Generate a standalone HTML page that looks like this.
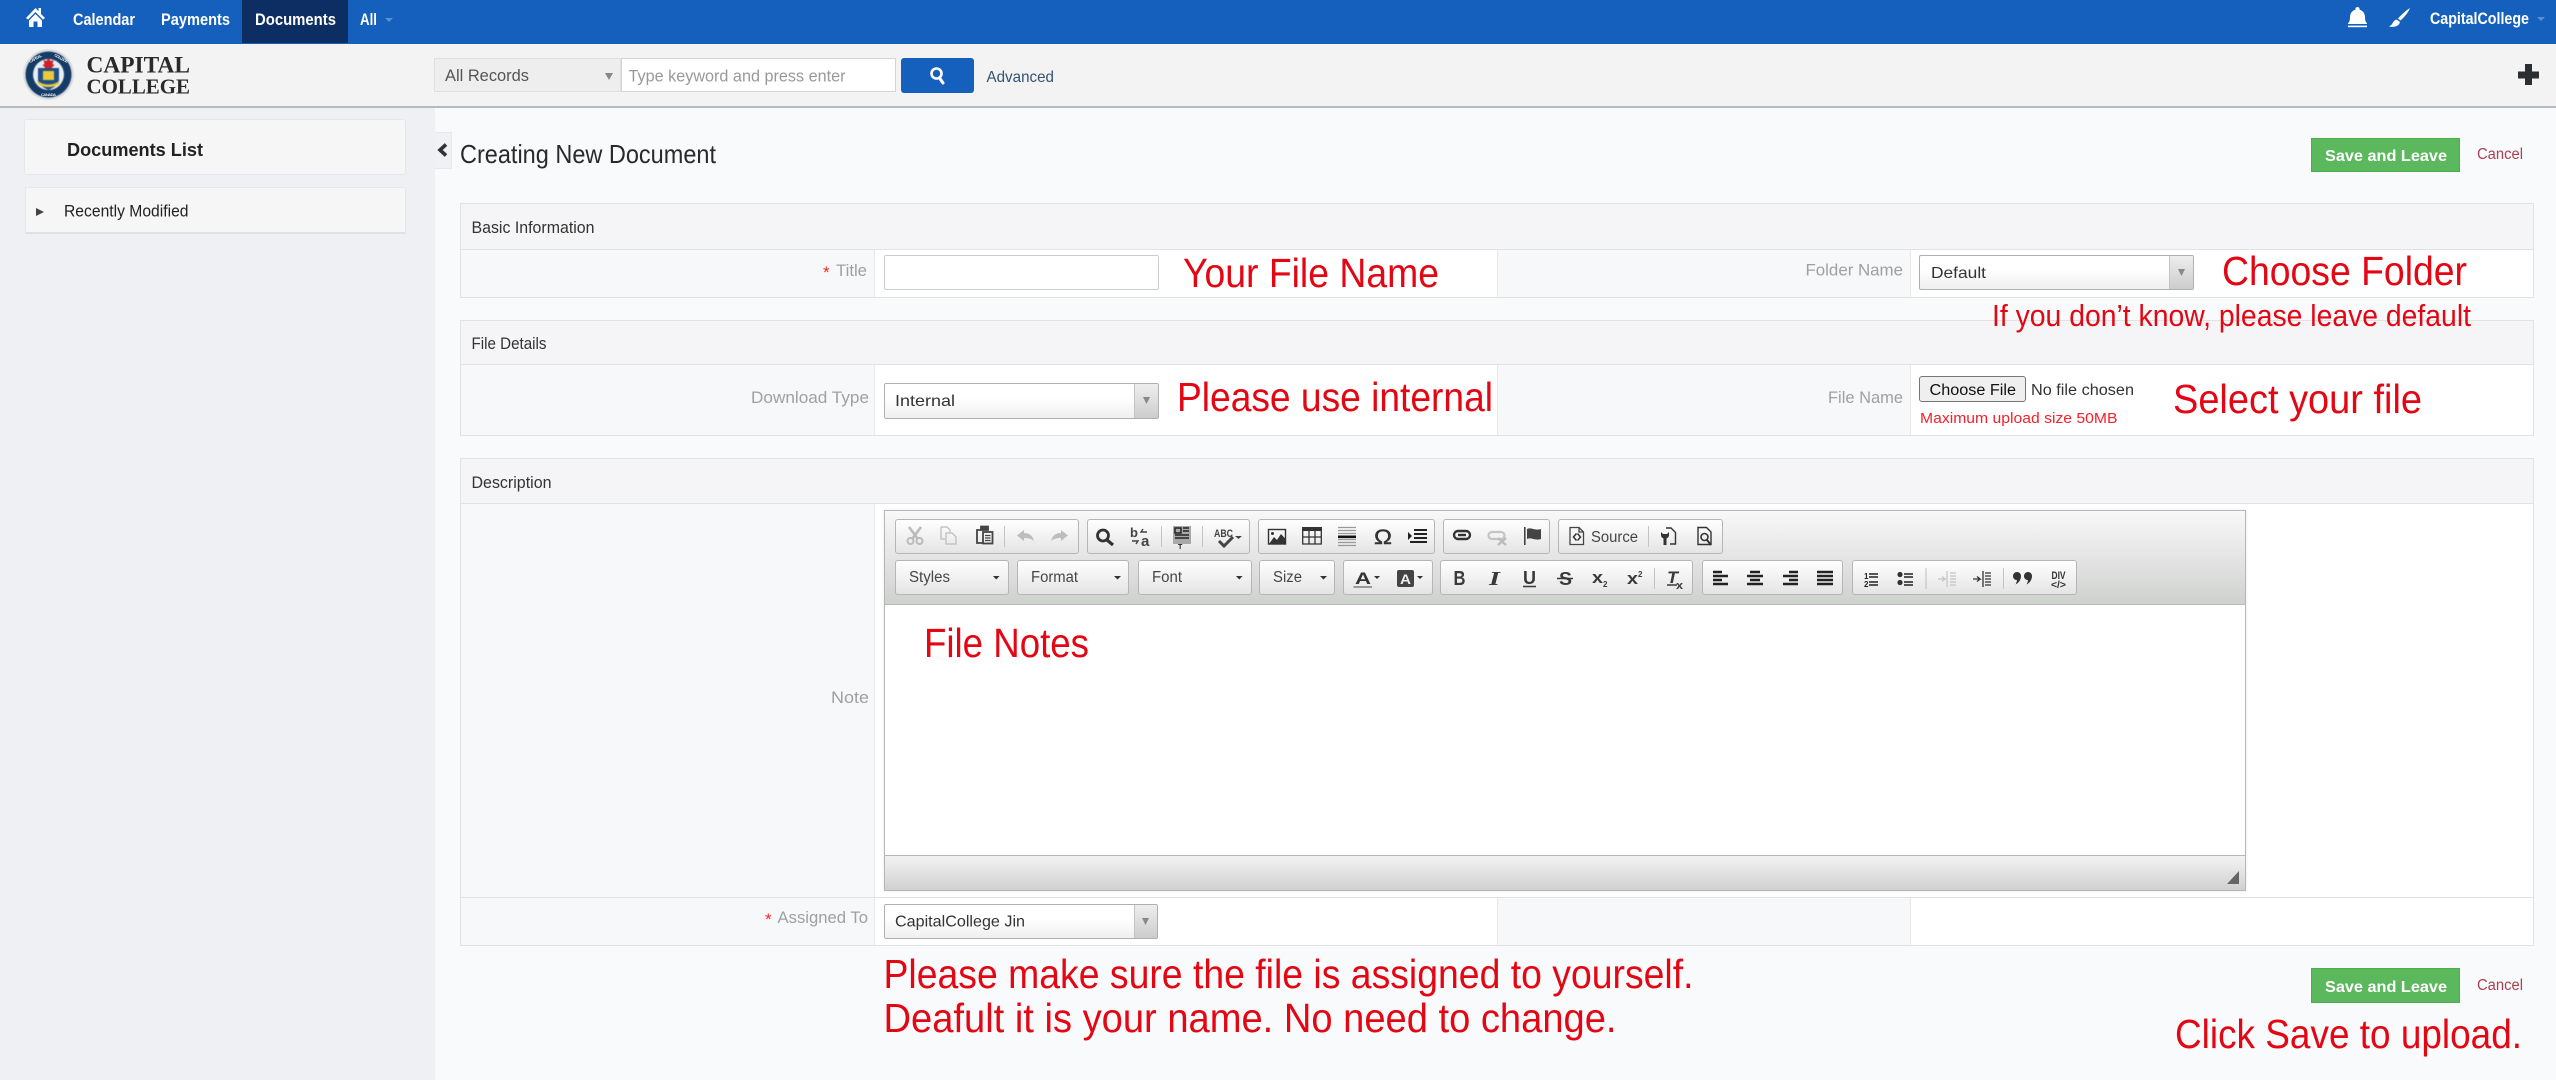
<!DOCTYPE html>
<html lang="en">
<head>
<meta charset="utf-8">
<title>Creating New Document</title>
<style>
html,body{margin:0;padding:0;width:2556px;height:1080px;overflow:hidden;background:#f9fafc;font-family:"Liberation Sans",sans-serif}
.b{position:absolute;box-sizing:border-box}
svg.o{position:absolute;left:0;top:0}
text{font-family:"Liberation Sans",sans-serif}
.an{fill:#e30613;font-size:41px}
.lb{fill:#a0a0a0;font-size:17px}
.hd{fill:#333;font-size:16.500px}
.tg{background:linear-gradient(#fff,#e4e4e4);border:1px solid #b6b6b6;border-radius:3px}
.sel{background:linear-gradient(#fff 40%,#efefef);border:1px solid #b0b0b0;border-radius:2px}
.ar{background:linear-gradient(#eee,#cdcdcd);border-left:1px solid #c4c4c4}
.sec{background:#f5f5f7;border:1px solid #e2e2e2}
.row{background:#fff;border:1px solid #e2e2e2;border-top:0}
.lc{background:#f7f8fa;border-right:1px solid #e8e8e8;border-left:1px solid #e8e8e8}
.btn{background:#5cb85c;border:1px solid #4cae4c}
</style>
</head>
<body>
<!-- top nav -->
<div class="b" style="left:0;top:0;width:2556px;height:44px;background:#1560bd"></div>
<div class="b" style="left:242px;top:0;width:106px;height:43px;background:#0c2e63"></div>
<!-- header bar -->
<div class="b" style="left:0;top:44px;width:2556px;height:64px;background:#f3f3f3;border-bottom:2px solid #b9b9b9;z-index:3"></div>
<!-- sidebar -->
<div class="b" style="left:0;top:108px;width:435px;height:972px;background:#eef0f4"></div>
<div class="b" style="left:24px;top:119px;width:382px;height:56px;background:#f6f6f6;border:1px solid #e6e7ea;border-radius:3px"></div>
<div class="b" style="left:25px;top:187px;width:381px;height:47px;background:#f6f6f6;border:1px solid #e6e7ea;border-bottom:2px solid #e0e1e4"></div>
<div class="b" style="left:435px;top:132px;width:17px;height:37px;background:#f0f1f4;border:1px solid #e6e7ea;border-left:0"></div>
<!-- search -->
<div class="b" style="left:434px;top:58px;width:187px;height:34px;background:#eee;border:1px solid #e0e0e0;z-index:4"></div>
<div class="b" style="left:621px;top:58px;width:275px;height:34px;background:#fff;border:1px solid #d4d4d4;z-index:4"></div>
<div class="b" style="left:901px;top:58px;width:73px;height:35px;background:#1560bd;border-radius:3px;z-index:4"></div>

<!-- section 1 -->
<div class="b sec" style="left:460px;top:203px;width:2074px;height:47px"></div>
<div class="b row" style="left:460px;top:249px;width:2074px;height:49px;border-top:1px solid #e2e2e2"></div>
<div class="b lc" style="left:461px;top:250px;width:414px;height:47px;border-left:0"></div>
<div class="b lc" style="left:1497px;top:250px;width:414px;height:47px"></div>
<div class="b" style="left:884px;top:255px;width:275px;height:35px;background:#fff;border:1px solid #ccc;border-radius:2px"></div>
<div class="b sel" style="left:1919px;top:255px;width:275px;height:35px"></div>
<div class="b ar" style="left:2169px;top:256px;width:24px;height:33px"></div>

<!-- section 2 -->
<div class="b sec" style="left:460px;top:320px;width:2074px;height:45px"></div>
<div class="b row" style="left:460px;top:364px;width:2074px;height:72px;border-top:1px solid #e2e2e2"></div>
<div class="b lc" style="left:461px;top:365px;width:414px;height:70px;border-left:0"></div>
<div class="b lc" style="left:1497px;top:365px;width:414px;height:70px"></div>
<div class="b sel" style="left:884px;top:383px;width:275px;height:36px"></div>
<div class="b ar" style="left:1134px;top:384px;width:24px;height:34px"></div>
<div class="b" style="left:1919px;top:376px;width:107px;height:26px;background:#efefef;border:1px solid #767676;border-radius:3px"></div>

<!-- section 3 -->
<div class="b sec" style="left:460px;top:458px;width:2074px;height:46px"></div>
<div class="b row" style="left:460px;top:503px;width:2074px;height:395px;border-top:1px solid #e2e2e2"></div>
<div class="b lc" style="left:461px;top:504px;width:414px;height:393px;border-left:0"></div>
<div class="b row" style="left:460px;top:897px;width:2074px;height:49px;border-top:1px solid #e2e2e2"></div>
<div class="b lc" style="left:461px;top:898px;width:414px;height:47px;border-left:0"></div>
<div class="b lc" style="left:1497px;top:898px;width:414px;height:47px"></div>
<div class="b sel" style="left:884px;top:904px;width:274px;height:35px"></div>
<div class="b ar" style="left:1134px;top:905px;width:23px;height:33px"></div>

<!-- editor -->
<div class="b" style="left:884px;top:510px;width:1362px;height:381px;background:#fff;border:1px solid #b6b6b6;box-shadow:0 0 3px rgba(0,0,0,.1)"></div>
<div class="b" style="left:885px;top:511px;width:1360px;height:94px;background:linear-gradient(#f8f8f8,#cfd1cf);border-bottom:1px solid #bcbcbc"></div>
<div class="b" style="left:885px;top:855px;width:1360px;height:35px;background:linear-gradient(#f2f2f2,#cfd1cf);border-top:1px solid #b6b6b6"></div>
<!-- toolbar groups -->
<div class="b tg" style="left:895px;top:519px;width:184px;height:35px"></div>
<div class="b tg" style="left:1087px;top:519px;width:163px;height:35px"></div>
<div class="b tg" style="left:1258px;top:519px;width:177px;height:35px"></div>
<div class="b tg" style="left:1443px;top:519px;width:107px;height:35px"></div>
<div class="b tg" style="left:1558px;top:519px;width:165px;height:35px"></div>
<div class="b tg" style="left:895px;top:560px;width:114px;height:35px"></div>
<div class="b tg" style="left:1017px;top:560px;width:112px;height:35px"></div>
<div class="b tg" style="left:1138px;top:560px;width:114px;height:35px"></div>
<div class="b tg" style="left:1259px;top:560px;width:76px;height:35px"></div>
<div class="b tg" style="left:1343px;top:560px;width:90px;height:35px"></div>
<div class="b tg" style="left:1440px;top:560px;width:253px;height:35px"></div>
<div class="b tg" style="left:1702px;top:560px;width:141px;height:35px"></div>
<div class="b tg" style="left:1852px;top:560px;width:225px;height:35px"></div>
<!-- buttons -->
<div class="b btn" style="left:2311px;top:138px;width:149px;height:34px"></div>
<div class="b btn" style="left:2311px;top:968px;width:149px;height:35px"></div>

<svg class="o" width="2556" height="1080" viewBox="0 0 2556 1080" style="z-index:5">
<!-- NAV -->
<g fill="#fff">
<path d="M35.5 8 L26 18 L28 19.5 L35.5 12 L43 19.5 L45 18 L41 14 V8 H38.5 V11.2 Z"/>
<path d="M35.5 14 L29 20.5 V27 H33.5 V21.5 H37.5 V27 H42 V20.5 Z"/>
</g>
<g fill="#fff" font-size="17" font-weight="700">
<text x="73" y="25" textLength="62" lengthAdjust="spacingAndGlyphs">Calendar</text>
<text x="161" y="25" textLength="69" lengthAdjust="spacingAndGlyphs">Payments</text>
<text x="255" y="25" textLength="81" lengthAdjust="spacingAndGlyphs">Documents</text>
<text x="360" y="25" textLength="17" lengthAdjust="spacingAndGlyphs">All</text>
<text x="2430" y="24" textLength="99" lengthAdjust="spacingAndGlyphs">CapitalCollege</text>
</g>
<path d="M385 18h8l-4 4z M2537 17h8l-4 4z" fill="#5d8fd0"/>
<!-- bell -->
<path d="M2357.5 7a2 2 0 0 1 2 2.600c3.500 1 5.500 4 5.500 7.400 0 3.500.8 5 2 6.500v0.500h-19v-.5c1.200-1.500 2-3 2-6.500 0-3.400 2-6.400 5.500-7.400a2 2 0 0 1 2-2.600z" fill="#fff"/>
<rect x="2348" y="25.600" width="19" height="1.600" fill="#fff"/>
<!-- brush -->
<path d="M2410 8 C2406 10.500 2401.500 14.500 2398 18.500 L2400.500 20.500 C2404 17.500 2408 13 2410 8Z" fill="#fff"/>
<path d="M2396.500 19.500 C2392.500 20.500 2393.500 24.500 2389 26.500 C2394 27.800 2400 26 2399.800 21.800 Z" fill="#fff"/>

<!-- LOGO -->
<g style="filter:blur(.5px)">
<circle cx="48.500" cy="74.500" r="24.500" fill="#e9e9e9" stroke="#cfcfcf"/>
<circle cx="48.500" cy="74.500" r="23" fill="#143c66"/>
<circle cx="48.500" cy="74.500" r="15.500" fill="#e8eef3"/>
<path d="M38 68 H59 V79 C59 85 53 88 48.500 90 C44 88 38 85 38 79Z" fill="#1f4e86"/>
<path d="M48.500 58 l2 3 3-1-1 4 2 1-3 3h-6l-3-3 2-1-1-4 3 1z" fill="#cf2027"/>
<rect x="43" y="71" width="11" height="9" fill="#e9c93a"/>
<path d="M37 80 C42 86 55 86 60 80 L59 84 C55 88 42 88 38 84Z" fill="#e9c93a"/>
</g>
<text x="30" y="63" font-size="4" fill="#dfe7ee" font-weight="700" transform="rotate(-28 30 63)" textLength="14">CAPITAL</text>
<text x="54" y="56" font-size="4" fill="#dfe7ee" font-weight="700" transform="rotate(28 54 56)" textLength="15">COLLEGE</text>
<text x="41" y="96" font-size="4" fill="#dfe7ee" font-weight="700" textLength="15">CANADA</text>
<text x="86.500" y="72.500" font-size="23" font-weight="700" fill="#2a2a2a" style="font-family:'Liberation Serif',serif" textLength="103.500" lengthAdjust="spacingAndGlyphs">CAPITAL</text>
<text x="86.500" y="93.300" font-size="21" font-weight="700" fill="#2a2a2a" style="font-family:'Liberation Serif',serif" textLength="103.500" lengthAdjust="spacingAndGlyphs">COLLEGE</text>

<!-- SEARCH -->
<text x="445" y="81" font-size="17" fill="#555" textLength="84" lengthAdjust="spacingAndGlyphs">All Records</text>
<path d="M605 73h8l-4 7z" fill="#888"/>
<text x="628.500" y="81.500" font-size="17" fill="#999" textLength="217" lengthAdjust="spacingAndGlyphs">Type keyword and press enter</text>
<circle cx="936.500" cy="73.500" r="5" fill="none" stroke="#fff" stroke-width="2.600"/>
<path d="M939.500 78 L943 83" stroke="#fff" stroke-width="3" stroke-linecap="round"/>
<text x="986.500" y="82" font-size="16" fill="#33536f" textLength="67.500" lengthAdjust="spacingAndGlyphs">Advanced</text>
<!-- plus -->
<path d="M2525 64h7v7.500h7v7h-7V85h-7v-6.500h-7v-7h7z" fill="#2b2e33"/>

<!-- SIDEBAR -->
<text x="67" y="156" font-size="18.500" font-weight="700" fill="#222" textLength="136" lengthAdjust="spacingAndGlyphs">Documents List</text>
<path d="M36 208 l8 4 -8 4z" fill="#444"/>
<text x="64" y="216.500" font-size="16.500" fill="#222" textLength="124.500" lengthAdjust="spacingAndGlyphs">Recently Modified</text>
<path d="M446 144.500 L440 150 L446 155.500" fill="none" stroke="#333" stroke-width="3.600" stroke-linejoin="miter"/>

<!-- CONTENT -->
<text x="460" y="163" font-size="26" fill="#2a2a2a" textLength="256" lengthAdjust="spacingAndGlyphs">Creating New Document</text>
<text x="2325" y="161" font-size="16" font-weight="700" fill="#fff" textLength="122" lengthAdjust="spacingAndGlyphs">Save and Leave</text>
<text x="2477" y="159" font-size="15.500" fill="#a8404f" textLength="46" lengthAdjust="spacingAndGlyphs">Cancel</text>
<text x="2325" y="992" font-size="16" font-weight="700" fill="#fff" textLength="122" lengthAdjust="spacingAndGlyphs">Save and Leave</text>
<text x="2477" y="990" font-size="15.500" fill="#a8404f" textLength="46" lengthAdjust="spacingAndGlyphs">Cancel</text>

<text class="hd" x="471.500" y="233" textLength="123" lengthAdjust="spacingAndGlyphs">Basic Information</text>
<text class="hd" x="471.500" y="349" textLength="75" lengthAdjust="spacingAndGlyphs">File Details</text>
<text class="hd" x="471.500" y="488" textLength="80" lengthAdjust="spacingAndGlyphs">Description</text>

<text x="823" y="278" font-size="17" fill="#f22">*</text>
<text class="lb" x="836" y="276" textLength="31" lengthAdjust="spacingAndGlyphs">Title</text>
<text class="lb" x="1805.500" y="275.500" textLength="97.500" lengthAdjust="spacingAndGlyphs">Folder Name</text>
<text x="1931" y="278" font-size="16" fill="#333" textLength="55" lengthAdjust="spacingAndGlyphs">Default</text>
<path d="M2178 269h7l-3.500 7z" fill="#888"/>
<text class="lb" x="751" y="403" textLength="118" lengthAdjust="spacingAndGlyphs">Download Type</text>
<text x="895" y="406" font-size="16" fill="#333" textLength="60" lengthAdjust="spacingAndGlyphs">Internal</text>
<path d="M1143 397h7l-3.500 7z" fill="#888"/>
<text class="lb" x="1828" y="403" textLength="75" lengthAdjust="spacingAndGlyphs">File Name</text>
<text x="1929.500" y="395" font-size="15.500" fill="#111" textLength="86.500" lengthAdjust="spacingAndGlyphs">Choose File</text>
<text x="2031" y="395" font-size="15.500" fill="#333" textLength="103" lengthAdjust="spacingAndGlyphs">No file chosen</text>
<text x="1920" y="423" font-size="15" fill="#f4202a" textLength="197.500" lengthAdjust="spacingAndGlyphs">Maximum upload size 50MB</text>
<text class="lb" x="831" y="703" textLength="38" lengthAdjust="spacingAndGlyphs">Note</text>
<text x="765" y="925" font-size="17" fill="#f22">*</text>
<text class="lb" x="777.500" y="923" textLength="90.500" lengthAdjust="spacingAndGlyphs">Assigned To</text>
<text x="895" y="926.500" font-size="16" fill="#333" textLength="130" lengthAdjust="spacingAndGlyphs">CapitalCollege Jin</text>
<path d="M1142 918h7l-3.500 7z" fill="#888"/>

<!-- TOOLBAR row 1 -->
<g stroke="#bbb" fill="none" stroke-width="2">
<circle cx="910.500" cy="541" r="3"/><circle cx="919.500" cy="541" r="3"/>
<path d="M909 527 L917.500 538.500 M921 527 L912.500 538.500" stroke-width="2.600"/>
<path d="M941 527h6l3 3v2M941 527v12h4M946 533h6l4 4v7h-10z" stroke-width="1.200"/>
</g>
<g fill="none" stroke="#444" stroke-width="1.800">
<path d="M981 530h-4v13h6"/><path d="M981 526.500h7v3.500h-7z" fill="#444"/>
<rect x="983" y="532" width="9.500" height="11.500"/>
<path d="M985 535.500h5.500M985 538h5.500M985 540.500h5.500" stroke-width="1.200"/>
</g>
<rect x="1004" y="526" width="1" height="21" fill="#c4c4c4"/>
<path d="M1017 535.500 L1024 530 V533 C1030 533 1033 536.500 1034 541 C1031 538.500 1028 538 1024 538 V541Z" fill="#bdbdbd"/>
<path d="M1068 535.500 L1061 530 V533 C1055 533 1052 536.500 1051 541 C1054 538.500 1057 538 1061 538 V541Z" fill="#bdbdbd"/>
<circle cx="1103" cy="535.500" r="5.500" fill="none" stroke="#333" stroke-width="2.800"/>
<path d="M1107 540 L1113 545" stroke="#333" stroke-width="3.200"/>
<text x="1130" y="537" font-size="13" font-weight="700" fill="#444" textLength="8">b</text>
<text x="1141" y="546" font-size="15" font-weight="700" fill="#444" textLength="8">a</text>
<path d="M1147 532h-6l2-3M1132 541h6l-2 3" fill="none" stroke="#444" stroke-width="1.400"/>
<rect x="1161" y="526" width="1" height="21" fill="#c4c4c4"/>
<rect x="1173" y="526" width="18" height="18" fill="#a9a9a9"/>
<path d="M1175 528h6v5h-6zM1175 535h14M1175 538h14M1183 528h6M1183 531h6" stroke="#222" stroke-width="1.500" fill="none"/>
<text x="1178" y="549" font-size="7" font-weight="700" fill="#222">T</text>
<rect x="1202" y="526" width="1" height="21" fill="#c4c4c4"/>
<text x="1214" y="537" font-size="11" font-weight="700" fill="#444" textLength="19" lengthAdjust="spacingAndGlyphs">ABC</text>
<path d="M1219 541 L1224 546 L1233 537" fill="none" stroke="#444" stroke-width="3"/>
<path d="M1235 536h7l-3.500 3z" fill="#444"/>
<!-- image -->
<rect x="1268.500" y="529.500" width="17" height="14.500" fill="none" stroke="#333" stroke-width="1.400"/>
<path d="M1269 544 L1274 537 L1277 540 L1281 534 L1285.500 539 V544Z" fill="#333"/>
<circle cx="1272.500" cy="533.500" r="1.500" fill="#333"/>
<!-- table -->
<rect x="1302" y="527" width="20" height="4" fill="#333"/>
<path d="M1302.700 530h18.600v14h-18.600zM1309 530v14M1315 530v14M1302.700 537h18.600" fill="none" stroke="#333" stroke-width="1.300"/>
<!-- hr -->
<path d="M1338 527.500h18M1338 530.500h18M1338 533.500h18M1338 539.500h18M1338 542.500h18M1338 545.500h18" stroke="#999" stroke-width="1.200"/>
<rect x="1338" y="535.500" width="18" height="2.600" fill="#111"/>
<text x="1374" y="544" font-size="21" font-weight="400" fill="#333" textLength="18" lengthAdjust="spacingAndGlyphs" stroke="#333" stroke-width=".4">Ω</text>
<!-- showblocks -->
<path d="M1408 532v8l4-4z" fill="#222"/>
<path d="M1414 530h13M1414 534h13M1414 538h13M1410 542h17" stroke="#222" stroke-width="2"/>
<!-- link -->
<rect x="1454" y="531" width="16" height="8" rx="4" fill="none" stroke="#333" stroke-width="2.400"/>
<path d="M1458 535h8" stroke="#333" stroke-width="2.400"/>
<rect x="1488.500" y="532" width="16" height="7" rx="3.500" fill="none" stroke="#c4c4c4" stroke-width="2.200"/>
<path d="M1498 538 L1506 545 M1506 538 L1498 545" stroke="#bbb" stroke-width="2.400"/>
<!-- flag -->
<rect x="1524" y="527" width="1.600" height="18" fill="#444"/>
<path d="M1527 529 C1531 527 1535 531 1541 529 V539 C1535 541 1531 537 1527 539Z" fill="#444"/>
<!-- source -->
<path d="M1570 527.500h9l4.500 4.500v12.500h-13.500z M1579 527.500v4.500h4.500" fill="#f4f4f4" stroke="#444" stroke-width="1.300"/>
<path d="M1576.500 533.500 l-3 3.500 3 3.500 M1577.500 533.500 l3 3.500 -3 3.500" fill="none" stroke="#333" stroke-width="1.500"/>
<text x="1591" y="542" font-size="15.500" fill="#474747" textLength="47" lengthAdjust="spacingAndGlyphs">Source</text>
<rect x="1648" y="526" width="1" height="21" fill="#c4c4c4"/>
<path d="M1666 528h5l4.500 4.500V544H1670" fill="none" stroke="#333" stroke-width="1.400"/>
<path d="M1661 532v3c0 2 1.500 3 2.500 3.500V545h3v-6.500c1-.5 2.500-1.500 2.500-3.500v-3l-2 2h-4z" fill="#333"/>
<path d="M1698 527.500h8.500l4.500 4.500v12.500h-13z" fill="none" stroke="#333" stroke-width="1.400"/>
<circle cx="1704.500" cy="537" r="3.500" fill="#f0f0f0" stroke="#333" stroke-width="1.600"/>
<path d="M1707 540 L1711 545" stroke="#333" stroke-width="2"/>

<!-- row 2 -->
<g font-size="15.500" fill="#474747">
<text x="909" y="582" textLength="41" lengthAdjust="spacingAndGlyphs">Styles</text>
<text x="1031" y="582" textLength="47" lengthAdjust="spacingAndGlyphs">Format</text>
<text x="1152" y="582" textLength="30" lengthAdjust="spacingAndGlyphs">Font</text>
<text x="1273" y="582" textLength="29" lengthAdjust="spacingAndGlyphs">Size</text>
</g>
<path d="M993 576h6.500l-3.250 3.500z M1114 576h7l-3.500 3.500z M1236 576h6.500l-3.250 3.500z M1320 576h7l-3.500 3.500z" fill="#333"/>
<text x="1355" y="584" font-size="17" font-weight="700" fill="#333" textLength="16" lengthAdjust="spacingAndGlyphs">A</text>
<rect x="1353.500" y="586" width="18.500" height="2" fill="#999"/>
<path d="M1374 576h6l-3 3z M1417 576h6l-3 3z" fill="#333"/>
<rect x="1397" y="570" width="17" height="17" rx="2" fill="#444"/>
<text x="1400" y="584" font-size="14" font-weight="700" fill="#eee" textLength="11" lengthAdjust="spacingAndGlyphs">A</text>
<g fill="#3a3a3a" font-weight="700">
<text x="1453.500" y="585" font-size="20" textLength="12" lengthAdjust="spacingAndGlyphs">B</text>
<text x="1489" y="585" font-size="20" font-style="italic" textLength="11" lengthAdjust="spacingAndGlyphs" style="font-family:'Liberation Serif',serif">I</text>
<text x="1523" y="584" font-size="18" textLength="13" lengthAdjust="spacingAndGlyphs">U</text>
<text x="1559" y="585" font-size="18" textLength="13" lengthAdjust="spacingAndGlyphs">S</text>
<text x="1592" y="583" font-size="17" textLength="11" lengthAdjust="spacingAndGlyphs">x</text>
<text x="1603" y="587" font-size="8" textLength="5">2</text>
<text x="1627" y="584" font-size="17" textLength="11" lengthAdjust="spacingAndGlyphs">x</text>
<text x="1638" y="577" font-size="8" textLength="5">2</text>
<text x="1667" y="583" font-size="17" font-style="italic" textLength="11" lengthAdjust="spacingAndGlyphs">T</text>
<text x="1676" y="589" font-size="11" textLength="7" lengthAdjust="spacingAndGlyphs">x</text>
</g>
<path d="M1523 586.500h13M1557 578.500h16M1667 585h10" stroke="#3a3a3a" stroke-width="1.600"/>
<rect x="1654" y="568" width="1" height="21" fill="#c4c4c4"/>
<g fill="none" stroke="#222" stroke-width="2.400">
<path d="M1713 572h9M1713 576h15M1713 580h9M1713 584h15"/>
<path d="M1750 572h10M1747 576h16M1750 580h10M1747 584h16"/>
<path d="M1789 572h9M1783 576h15M1789 580h9M1783 584h15"/>
<path d="M1817 572h16M1817 576h16M1817 580h16M1817 584h16"/>
</g>
<g fill="none" stroke="#222" stroke-width="1.500">
<path d="M1869 574h9M1869 577h9M1869 582h9M1869 585h9"/>
<path d="M1904 574h9M1904 577h9M1904 582h9M1904 585h9"/>
</g>
<text x="1864" y="579" font-size="8" font-weight="700" fill="#222">1</text>
<text x="1864" y="587" font-size="8" font-weight="700" fill="#222">2</text>
<circle cx="1900" cy="574.500" r="2.600" fill="#333"/><circle cx="1900" cy="582.500" r="2.600" fill="#333"/>
<rect x="1925.500" y="568" width="1" height="21" fill="#bcbcbc"/>
<g stroke="#c4c4c4" stroke-width="1.200" fill="none">
<path d="M1947 571v16M1950 573h6M1950 576h6M1950 579h6M1950 582h6M1950 585h6M1938 579h7l-3-2.500m3 2.500-3 2.500"/>
</g>
<g stroke="#333" stroke-width="1.300" fill="none">
<path d="M1983 571v16M1985 573h6M1985 576h6M1985 579h6M1985 582h6M1985 585h6M1973 579h7l-3-2.500m3 2.500-3 2.500"/>
</g>
<rect x="2003" y="568" width="1" height="21" fill="#c4c4c4"/>
<path d="M2013 576a4 4 0 1 1 8 0c0 4-2.500 7-5.500 8.500 1-1.800 1.500-3.300 1.400-4.500-2.200.1-3.900-1.600-3.900-4z M2024 576a4 4 0 1 1 8 0c0 4-2.500 7-5.500 8.500 1-1.800 1.500-3.300 1.400-4.500-2.200.1-3.900-1.600-3.900-4z" fill="#333"/>
<text x="2051.500" y="579" font-size="11" font-weight="700" fill="#333" textLength="14" lengthAdjust="spacingAndGlyphs">DIV</text>
<text x="2051" y="588" font-size="10.500" font-weight="700" fill="#333" textLength="15" lengthAdjust="spacingAndGlyphs">&lt;/&gt;</text>
<!-- grip -->
<path d="M2239 871V884H2227Z" fill="#666"/>

<!-- ANNOTATIONS -->
<text class="an" x="1183" y="287" textLength="256" lengthAdjust="spacingAndGlyphs">Your File Name</text>
<text class="an" x="2222" y="285" textLength="245" lengthAdjust="spacingAndGlyphs">Choose Folder</text>
<text class="an" x="1992" y="326" style="font-size:31px" textLength="479" lengthAdjust="spacingAndGlyphs">If you don’t know, please leave default</text>
<text class="an" x="1177" y="411" textLength="316" lengthAdjust="spacingAndGlyphs">Please use internal</text>
<text class="an" x="2173" y="413" textLength="249" lengthAdjust="spacingAndGlyphs">Select your file</text>
<text class="an" x="924" y="657" textLength="165" lengthAdjust="spacingAndGlyphs">File Notes</text>
<text class="an" x="883.500" y="988" textLength="810" lengthAdjust="spacingAndGlyphs">Please make sure the file is assigned to yourself.</text>
<text class="an" x="883.500" y="1032" textLength="733" lengthAdjust="spacingAndGlyphs">Deafult it is your name. No need to change.</text>
<text class="an" x="2175" y="1048" textLength="347" lengthAdjust="spacingAndGlyphs">Click Save to upload.</text>
</svg>
</body>
</html>
